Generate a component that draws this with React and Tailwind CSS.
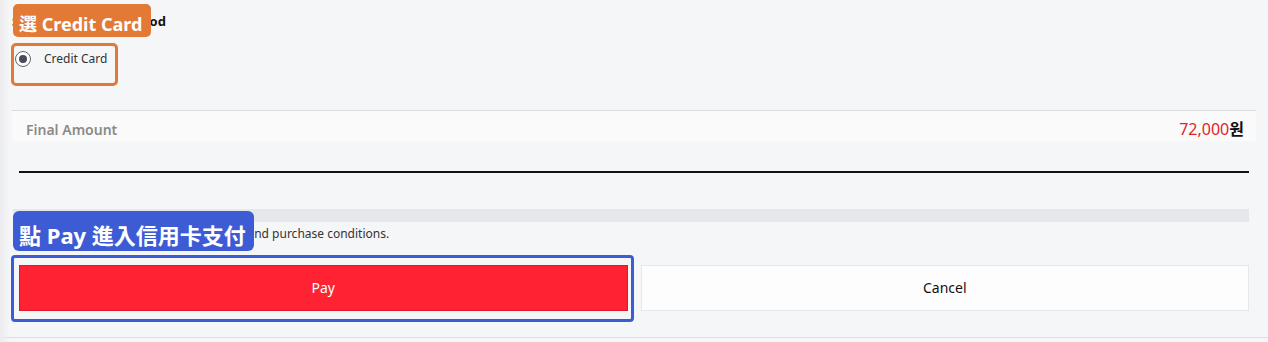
import React from 'react';

const FONT = { fontFamily: '"Noto Sans", "Noto Sans CJK KR", "Noto Sans CJK TC", sans-serif' };

export default function App() {
  return (
    <div className="relative w-[1268px] h-[342px] overflow-hidden bg-[#f5f6f8] text-[#111]" style={FONT}>
      {/* page content */}
      <div className="w-[1256px] pl-[12px]">
        <h3 className="pt-[12px] h-[30px] text-[13px] leading-[18px] font-bold">Select Payment Method</h3>

        <label className="mt-[21px] ml-[3px] flex items-start gap-[13px] h-[59px]">
          <span className="w-[16px] h-[16px] rounded-full border border-[#666] bg-white flex items-center justify-center">
            <span className="w-[8px] h-[8px] rounded-full bg-[#4a4a58]" />
          </span>
          <span className="pt-[2px] text-[12px] leading-[12px] text-[#333]">Credit Card</span>
        </label>

        <div className="border-t border-[#dcdcdc]">
          <div className="h-[30px] bg-[#fafafa] flex items-center justify-between pl-[14px] pr-[12px] pt-[6px]">
            <span className="text-[14px] font-semibold text-[#8a8a8a]">Final Amount</span>
            <span className="text-[16px] font-bold"><span className="text-[#e2232a] font-normal">72,000</span>원</span>
          </div>
          <div className="ml-[7px] mt-[30px] w-[1230px] h-[2px] bg-[#111]" />
        </div>

        <div className="mt-[36px] ml-[1px] w-[1236px] h-[13px] bg-[#e6e7ea]" />
        <p className="mt-[3px] ml-[4px] text-[12px] leading-[18px] text-[#333]">I have checked the payment information and purchase conditions.</p>

        <div className="mt-[22px] ml-[7px] flex gap-[13px] w-[1230px]">
          <button className="flex-1 h-[46px] pb-[2px] bg-[#ff2233] border border-[#e01828] text-white text-[14px]">Pay</button>
          <button className="flex-1 h-[46px] pb-[2px] bg-[#fdfdfd] border border-[#e6e7ea] text-[#111] text-[14px]">Cancel</button>
        </div>
      </div>
      <div className="absolute left-0 right-0 top-[337px] h-px bg-[#dedede]" />
      <div className="absolute left-0 top-0 bottom-0 w-[10px] bg-gradient-to-r from-[#ececee] to-transparent" />

      {/* annotations */}
      <div className="absolute left-[11px] top-[43px] w-[107px] h-[43px] rounded-[5px] border-[3px] border-[#e27a35]" />
      <div className="absolute left-[13px] top-[4px] w-[138px] h-[33px] rounded-[5px] bg-[#e27a35] text-white text-[18px] font-bold leading-[33px] pl-[6px] pt-[4px]">選 Credit Card</div>

      <div className="absolute left-[11px] top-[255px] w-[623px] h-[67px] rounded-[4px] border-[3px] border-[#3d5bd4]" />
      <div className="absolute left-[13px] top-[211px] w-[241px] h-[40px] rounded-[6px] bg-[#3d5bd4] text-white text-[22px] font-bold leading-[40px] pl-[6px] pt-[4px] whitespace-nowrap">點 Pay 進入信用卡支付</div>
    </div>
  );
}
